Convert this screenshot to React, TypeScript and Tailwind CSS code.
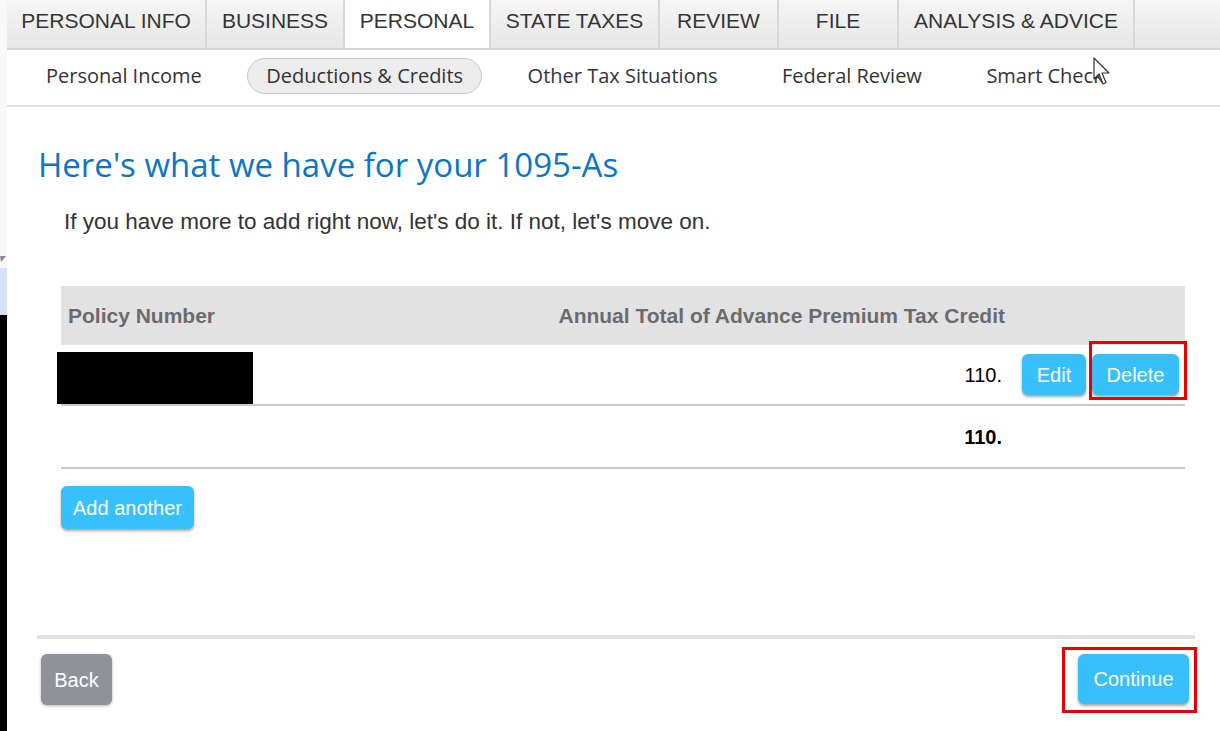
import React from "react";

const arial = { fontFamily: '"Liberation Sans", Arial, sans-serif' };
const avenir = { fontFamily: '"Open Sans", Lato, sans-serif' };

const tabs = [
  { label: "PERSONAL INFO", w: "w-[200px]" },
  { label: "BUSINESS", w: "w-[138px]" },
  { label: "PERSONAL", w: "w-[146px]", active: true },
  { label: "STATE TAXES", w: "w-[169px]" },
  { label: "REVIEW", w: "w-[119px]" },
  { label: "FILE", w: "w-[120px]" },
  { label: "ANALYSIS & ADVICE", w: "w-[236px]" },
];

const subs = [
  { label: "Personal Income" },
  { label: "Deductions & Credits", active: true },
  { label: "Other Tax Situations" },
  { label: "Federal Review" },
  { label: "Smart Check" },
];

function BlueBtn({ children, className = "" }: { children: React.ReactNode; className?: string }) {
  return (
    <button
      className={`bg-[#37c0fc] text-white text-[20px] rounded-[6px] shadow-[0_2px_3px_rgba(0,0,0,0.35)] flex items-center justify-center ${className}`}
      style={arial}
    >
      {children}
    </button>
  );
}

export default function App() {
  return (
    <div className="flex w-[1220px] h-[731px] overflow-hidden bg-white relative">
      {/* left strip */}
      <div className="w-[7px] flex flex-col shrink-0">
        <div className="h-[255px] bg-[#f8f8f8]" />
        <div className="h-[8px] bg-[#f8f8f8] relative">
          <svg width="7" height="8" className="absolute left-0 top-0">
            <polygon points="0,1 6,1 1,7" fill="#8a8a8a" />
          </svg>
        </div>
        <div className="h-[5px] bg-[#f8f8f8]" />
        <div className="h-[47px] bg-[#d6e2f8]" />
        <div className="flex-1 bg-black" />
      </div>

      <div className="flex-1 flex flex-col">
        {/* top tabs */}
        <div className="h-[50px] flex bg-gradient-to-b from-[#f6f6f6] to-[#e6e6e6] border-b-2 border-[#d6d6d6] shrink-0">
          {tabs.map((t) => (
            <div
              key={t.label}
              className={`${t.w} h-full flex items-center justify-center pb-[6px] text-[21px] text-[#353535] border-r-2 border-[#d8d8d8] ${
                t.active ? "bg-white" : ""
              }`}
              style={arial}
            >
              {t.label}
            </div>
          ))}
        </div>

        {/* sub nav */}
        <div className="h-[57px] flex items-center pl-[20px] pb-[3px] gap-[26.5px] border-b-2 border-[#e2e2e2] shrink-0">
          {subs.map((s) => (
            <div
              key={s.label}
              className={`h-[36px] px-[18px] flex items-center text-[20px] text-[#333] rounded-full ${
                s.active ? "bg-[#ededed] border border-[#c9c9c9]" : "border border-transparent"
              }`}
              style={avenir}
            >
              {s.label}
            </div>
          ))}
        </div>

        {/* heading */}
        <h1
          className="mt-[38px] ml-[31px] text-[33px] leading-[40px] font-medium text-[#0b76c5]"
          style={avenir}
        >
          Here's what we have for your 1095-As
        </h1>

        <p className="mt-[24px] ml-[57px] text-[22.5px] leading-[26px] text-[#333]" style={arial}>
          If you have more to add right now, let's do it. If not, let's move on.
        </p>

        {/* table */}
        <div className="mt-[51px] ml-[54px] w-[1124px] flex flex-col" style={arial}>
          <div className="h-[59px] bg-[#e2e2e2] flex items-center text-[21px] font-bold text-[#6b6b70]">
            <div className="flex-1 pl-[7px]">Policy Number</div>
            <div className="pr-[180px]">Annual Total of Advance Premium Tax Credit</div>
          </div>

          <div className="h-[61px] flex border-b-2 border-[#c9c9c9]">
            <div className="flex-1">
              <div className="mt-[7px] -ml-[4px] w-[196px] h-[52px] bg-black" />
            </div>
            <div className="flex items-center text-[20px] text-black pr-[3px]">110.</div>
            <div className="w-[180px] pl-[17px] flex items-center gap-[6px]">
              <BlueBtn className="w-[64px] h-[41px]">Edit</BlueBtn>
              <div className="relative">
                <BlueBtn className="w-[87px] h-[41px]">Delete</BlueBtn>
                <div className="absolute left-[-3px] right-[-8px] top-[-13px] bottom-[-5px] border-[3px] border-[#e60000] pointer-events-none" />
              </div>
            </div>
          </div>

          <div className="h-[63px] flex items-center border-b-2 border-[#c9c9c9]">
            <div className="flex-1" />
            <div className="text-[20px] font-bold text-black pr-[3px]">110.</div>
            <div className="w-[180px]" />
          </div>

          <div className="mt-[17px]">
            <BlueBtn className="w-[133px] h-[43px]">Add another</BlueBtn>
          </div>
        </div>

        {/* footer */}
        <div className="mt-[106px] ml-[30px] w-[1158px] h-[4px] bg-[#e0e0e0]" />
        <div className="ml-[30px] w-[1158px] mt-[15px] flex justify-between">
          <button
            className="ml-[4px] w-[71px] h-[51px] bg-[#8f9299] text-white text-[20px] rounded-[6px] shadow-[0_1px_3px_rgba(0,0,0,0.3)]"
            style={arial}
          >
            Back
          </button>
          <div className="relative mr-[6px]">
            <BlueBtn className="w-[111px] h-[50px]">Continue</BlueBtn>
            <div className="absolute left-[-16px] right-[-8px] top-[-7px] bottom-[-8px] border-[3px] border-[#e60000] pointer-events-none" />
          </div>
        </div>
      </div>

      {/* mouse cursor */}
      <svg
        className="absolute left-[1093px] top-[57px]"
        width="20"
        height="30"
        viewBox="0 0 20 30"
      >
        <path
          d="M1 1 L1 22 L6 17 L10 27 L13 25.5 L9 16 L16 16 Z"
          fill="white"
          stroke="#333"
          strokeWidth="1.2"
          strokeLinejoin="round"
        />
      </svg>
    </div>
  );
}
